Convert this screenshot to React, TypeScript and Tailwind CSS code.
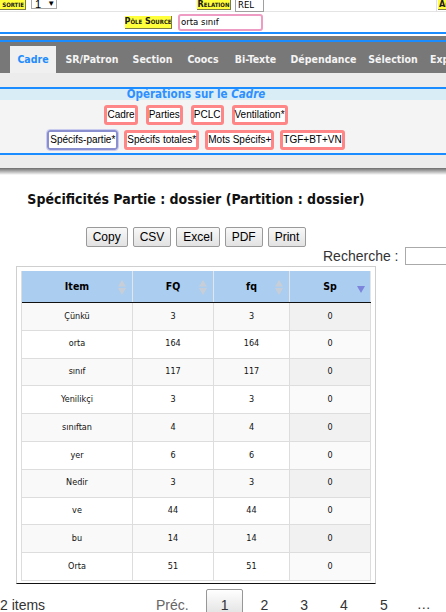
import React from "react";

const tah = "font-['DejaVu_Sans_Condensed','DejaVu_Sans',sans-serif]";
const ari = "font-['Liberation_Sans',Arial,sans-serif]";

const tabs = [
  { label: "Cadre", w: "w-[46px]", active: true },
  { label: "SR/Patron", w: "w-[62px]" },
  { label: "Section", w: "w-[49px]" },
  { label: "Coocs", w: "w-[42px]" },
  { label: "Bi-Texte", w: "w-[53px]" },
  { label: "Dépendance", w: "w-[73px]" },
  { label: "Sélection", w: "w-[56px]" },
];

const opsRow1 = ["Cadre", "Parties", "PCLC", "Ventilation*"];
const opsRow2 = ["Spécifs-partie*", "Spécifs totales*", "Mots Spécifs+", "TGF+BT+VN"];

const cols = [
  { label: "Item", w: "w-[111px]" },
  { label: "FQ", w: "w-[81px]" },
  { label: "fq", w: "w-[76px]" },
  { label: "Sp", w: "w-[81px]" },
];

const rows: [string, number, number, number][] = [
  ["Çünkü", 3, 3, 0],
  ["orta", 164, 164, 0],
  ["sınıf", 117, 117, 0],
  ["Yenilikçi", 3, 3, 0],
  ["sınıftan", 4, 4, 0],
  ["yer", 6, 6, 0],
  ["Nedir", 3, 3, 0],
  ["ve", 44, 44, 0],
  ["bu", 14, 14, 0],
  ["Orta", 51, 51, 0],
];

function Tag({ children, className = "" }: { children: React.ReactNode; className?: string }) {
  return (
    <span
      className={`inline-flex shrink-0 items-center whitespace-nowrap overflow-hidden bg-[#ffff3c] border-r border-b border-[#7d7d4a] px-[1px] text-[9px] leading-none font-bold text-[#1a1a1a] [font-variant:small-caps] ${tah} ${className}`}
    >
      {children}
    </span>
  );
}

function OpButton({ label, selected }: { label: string; selected?: boolean }) {
  return (
    <span
      className={`flex h-[20px] items-center rounded-[3px] bg-white text-[10px] leading-none text-black ${ari} ${
        selected ? "border-2 border-[#8a90cf] px-[1px] outline outline-1 outline-[#c9ccef]" : "border-[3px] border-[#ff8686]"
      }`}
    >
      {label}
    </span>
  );
}

function SortBoth() {
  return (
    <svg width="8" height="15" viewBox="0 0 8 15" className="absolute right-[6px] top-[9px]">
      <path d="M4 0 L8 6.5 H0 Z" fill="#c8ced8" />
      <path d="M0 8 H8 L4 15 Z" fill="#c8ced8" />
    </svg>
  );
}

function SortDesc() {
  return (
    <svg width="8" height="7" viewBox="0 0 8 7" className="absolute right-[5px] top-[15px]">
      <path d="M0 0 H8 L4 7 Z" fill="#7d84dc" />
    </svg>
  );
}

export default function App() {
  return (
    <div className="h-[612px] w-[446px] overflow-hidden bg-white text-black">
      {/* top form rows */}
      <div className="flex h-[12px] items-start border-b border-[#e4e4e4]">
        <Tag className="h-[10px] w-[26px] justify-end">Pôle sortie</Tag>
        <div className={`ml-[5px] flex h-[9px] w-[26px] shrink-0 items-center border border-t-0 border-[#a9a9a9] pl-[3px] text-[11px] leading-none ${ari}`}>
          <span>1</span>
          <span className="ml-[6px] text-[8px]">▼</span>
        </div>
        <Tag className="ml-[140px] h-[10px] w-[34px] justify-center">Relation</Tag>
        <div className={`ml-[4px] h-[12px] w-[29px] shrink-0 border border-t-0 border-[#a0a0a0] pl-[2px] text-[9.5px] leading-[10px] ${tah}`}>
          REL
        </div>
        <div className="ml-[172px] flex h-[12px] shrink-0 items-start border-l border-[#e0e0e0] pl-[1px]">
          <Tag className="h-[10px]">Affichage</Tag>
        </div>
      </div>
      <div className="flex h-[22px] items-center border-b-2 border-[#1a8cff] pl-[125px]">
        <Tag className="h-[13px] w-[47px] justify-center text-[9.5px]">Pôle Source</Tag>
        <div className={`ml-[6px] flex h-[17px] w-[85px] items-center rounded-[3px] border-2 border-[#ee9cc3] pl-[1px] text-[9.5px] ${tah}`}>
          orta sınıf
        </div>
      </div>

      {/* tab bar */}
      <div className="mt-[2px] border-t-4 border-[#7a7a7a]">
        <div className="flex h-[33px] items-end gap-[5px] border-t-2 border-[#1a8cff] bg-[#787878] pl-[10px]">
          {tabs.map((t) => (
            <div
              key={t.label}
              className={`flex h-[27px] shrink-0 items-center justify-center pt-[1px] text-[10.5px] font-bold ${tah} ${t.w} ${
                t.active ? "bg-[#f0f0f0] text-[#1e8cff]" : "text-[#f4f4f4]"
              }`}
            >
              {t.label}
            </div>
          ))}
          <div className={`flex h-[27px] shrink-0 items-center pl-[4px] pt-[1px] text-[10.5px] font-bold text-[#f4f4f4] ${tah}`}>Export</div>
        </div>
      </div>

      {/* operations panel */}
      <div className="bg-[#ececec] pt-[14px] pb-[13px]">
        <div className="border-y-2 border-[#1a8cff]">
          <div className="h-[11px] bg-[#d9edf7]">
            <div className={`w-[392px] text-center text-[11.5px] leading-[11px] font-bold text-[#2e8fff] ${tah}`}>
              Opérations sur le <i>Cadre</i>
            </div>
          </div>
          <div className="bg-[#f4f4f4] pt-[5px] pb-[3px]">
            <div className="flex w-[392px] flex-col items-center gap-[5px]">
              <div className="flex gap-[8px]">
                {opsRow1.map((l) => (
                  <OpButton key={l} label={l} />
                ))}
              </div>
              <div className="flex gap-[6px]">
                {opsRow2.map((l, i) => (
                  <OpButton key={l} label={l} selected={i === 0} />
                ))}
              </div>
            </div>
          </div>
        </div>
      </div>
      <div className="h-[7px] bg-linear-to-b from-[#6c6c6c] via-[#b4b4b4] to-white" />

      {/* title + export buttons */}
      <div className="flex w-[392px] flex-col items-center">
        <h2 className={`mt-[15px] whitespace-nowrap text-[14px] leading-[18px] font-bold text-[#111] ${tah}`}>
          Spécificités Partie : dossier (Partition : dossier)
        </h2>
        <div className="mt-[19px] flex gap-[5px]">
          {["Copy", "CSV", "Excel", "PDF", "Print"].map((b) => (
            <span
              key={b}
              className={`flex h-[20px] items-center rounded-[2px] border border-[#9a9a9a] bg-linear-to-b from-[#f8f8f8] to-[#e2e2e2] px-[6px] text-[12px] leading-none text-black ${ari}`}
            >
              {b}
            </span>
          ))}
        </div>
      </div>

      {/* search */}
      <div className={`flex h-[18px] items-center pl-[323px] text-[14px] text-[#333] ${ari}`}>
        <span className="shrink-0 whitespace-nowrap">Recherche :</span>
        <span className="ml-[7px] h-[18px] w-[150px] shrink-0 border border-[#aaaaaa] bg-white" />
      </div>

      {/* table */}
      <div className="flex w-[392px] justify-center">
        <div className="mt-[1px] border border-[#cfcfcf] border-b-[#111] bg-white px-[4px] pt-[4px] pb-[2px]">
          <div className={`w-[350px] border-l border-[#dddddd] ${tah}`}>
            <div className="flex h-[32px] border-b border-[#111] bg-[#abcdef]">
              {cols.map((c, i) => (
                <div
                  key={c.label}
                  className={`relative flex items-center justify-center border-r border-[#e2e6ec] text-[10.5px] font-bold text-black ${c.w}`}
                >
                  {c.label}
                  {i === 3 ? <SortDesc /> : <SortBoth />}
                </div>
              ))}
            </div>
            {rows.map((r, i) => (
              <div key={i} className={`flex h-[27.8px] ${i % 2 === 0 ? "bg-[#f9f9f9]" : "bg-white"}`}>
                {r.map((v, j) => (
                  <div
                    key={j}
                    className={`flex items-center justify-center border-r border-b border-[#dddddd] text-[9px] text-[#111] ${cols[j].w} ${
                      j === 3 ? (i % 2 === 0 ? "bg-[#f1f1f1]" : "bg-[#fafafa]") : ""
                    }`}
                  >
                    {v}
                  </div>
                ))}
              </div>
            ))}
          </div>
        </div>
      </div>

      {/* footer */}
      <div className={`mt-[5px] flex text-[14px] leading-[16px] text-[#333] ${ari}`}>
        <div className="w-[141px] shrink-0 pt-[8px]">2 items</div>
        <div className="flex shrink-0">
          <span className="border border-transparent px-[14px] py-[7px] text-[#666]">Préc.</span>
          <span className="ml-[2px] rounded-[2px] border border-[#979797] bg-linear-to-b from-white to-[#dcdcdc] px-[14px] py-[7px]">1</span>
          {["2", "3", "4", "5"].map((p) => (
            <span key={p} className="ml-[2px] border border-transparent px-[14px] py-[7px]">
              {p}
            </span>
          ))}
          <span className="px-[14px] py-[7px]">…</span>
        </div>
      </div>
    </div>
  );
}
